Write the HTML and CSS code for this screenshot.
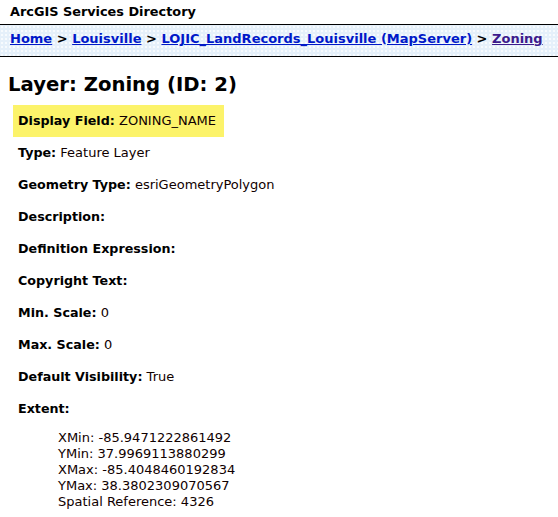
FILE: index.html
```html
<!DOCTYPE html>
<html>
<head>
<meta charset="utf-8">
<title>Layer: Zoning (ID: 2)</title>
<link rel="stylesheet" href="styles.css">
</head>
<body>
<div class="userTable">ArcGIS Services Directory</div>
<div class="navTable">
  <a href="#">Home</a> &gt; <a href="#">Louisville</a> &gt; <a href="#">LOJIC_LandRecords_Louisville (MapServer)</a> &gt; <a href="#" class="current">Zoning</a>
</div>
<h2 class="title">Layer: Zoning (ID: 2)</h2>
<ul class="props">
  <li class="hl"><b>Display Field:</b> ZONING_NAME</li>
  <li><b>Type:</b> Feature Layer</li>
  <li><b>Geometry Type:</b> esriGeometryPolygon</li>
  <li><b>Description:</b></li>
  <li><b>Definition Expression:</b></li>
  <li><b>Copyright Text:</b></li>
  <li><b>Min. Scale:</b> 0</li>
  <li><b>Max. Scale:</b> 0</li>
  <li><b>Default Visibility:</b> True</li>
  <li><b>Extent:</b>
    <ul class="extent">
      <li>XMin: -85.9471222861492</li>
      <li>YMin: 37.9969113880299</li>
      <li>XMax: -85.4048460192834</li>
      <li>YMax: 38.3802309070567</li>
      <li>Spatial Reference: 4326</li>
    </ul>
  </li>
</ul>
</body>
</html>
```
FILE: styles.css
```css
html, body {
  margin: 0;
  padding: 0;
  background: #fff;
  color: #000;
  font-family: "DejaVu Sans", Verdana, sans-serif;
  font-size: 13px;
  line-height: 16px;
}
.userTable {
  font-weight: bold;
  font-size: 12.85px;
  padding: 3px 10px 0 10px;
  height: 21px;
  line-height: 18px;
}
.navTable {
  border-top: 1px solid #000;
  border-bottom: 1px solid #000;
  background-color: #e5f0fa;
  background-image: radial-gradient(circle, #f7fbfe 0.8px, transparent 1px);
  background-size: 4px 4px;
  padding: 5px 10px 8px 10px;
  height: 18px;
  line-height: 18px;
  font-weight: bold;
  font-size: 13px;
  white-space: nowrap;
}
.navTable a {
  color: #0018c8;
  text-decoration: underline;
}
.navTable a.current {
  color: #3c1a8c;
}
.title {
  margin: 0;
  padding: 14px 8px 6px 8px;
  font-size: 19.65px;
  line-height: 28px;
  font-weight: bold;
}
.props {
  list-style: none;
  margin: 0;
  padding: 0 0 0 13px;
}
.props > li {
  padding: 8px 5px;
  line-height: 16px;
  color: #100000;
}
.props > li.hl {
  display: table;
  padding-right: 8px;
  background: #fcf36a;
}
.props b {
  font-weight: bold;
  font-size: 12.7px;
  color: #000;
}
.extent {
  list-style: none;
  margin: 0;
  padding: 13px 0 0 40px;
}
.extent li {
  line-height: 16px;
  color: #100000;
}
```
